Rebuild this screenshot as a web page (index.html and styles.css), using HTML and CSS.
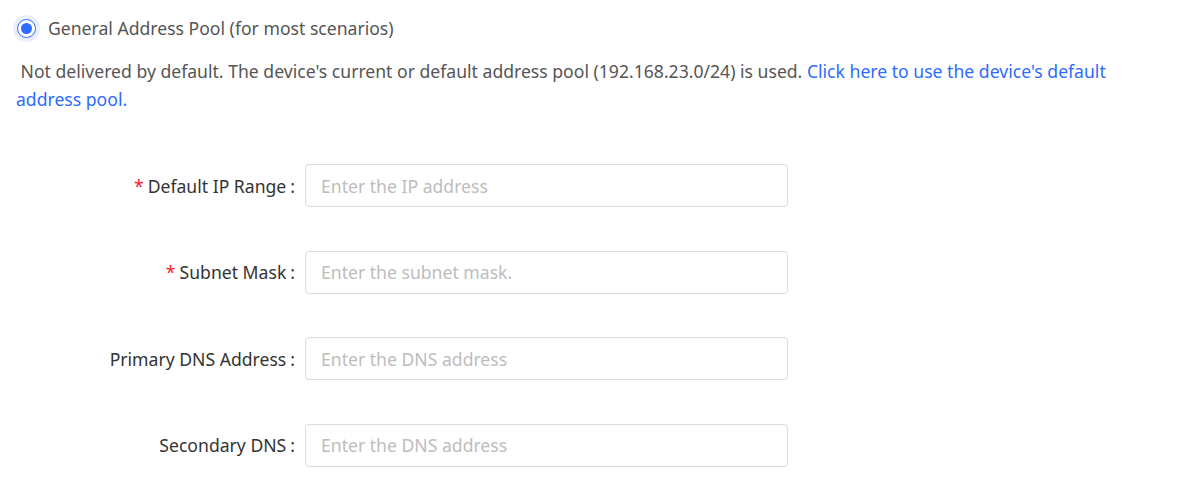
FILE: index.html
```html
<!DOCTYPE html>
<html lang="en">
<head>
<meta charset="utf-8">
<title>Address Pool</title>
<link rel="stylesheet" href="styles.css">
</head>
<body>
<div class="page">
  <label class="radio-row">
    <span class="radio"><span class="radio-dot"></span></span>
    <span class="radio-label">General Address Pool (for most scenarios)</span>
  </label>
  <p class="note">&nbsp;Not delivered by default. The device's current or default address pool (192.168.23.0/24) is used. <a class="link" href="#">Click here to use the device's default address pool.</a></p>
  <form class="form">
    <div class="row">
      <div class="label"><span class="req">*</span>Default IP Range<span class="colon">:</span></div>
      <input class="input" type="text" placeholder="Enter the IP address">
    </div>
    <div class="row">
      <div class="label"><span class="req">*</span>Subnet Mask<span class="colon">:</span></div>
      <input class="input" type="text" placeholder="Enter the subnet mask.">
    </div>
    <div class="row">
      <div class="label">Primary DNS Address<span class="colon">:</span></div>
      <input class="input" type="text" placeholder="Enter the DNS address">
    </div>
    <div class="row">
      <div class="label">Secondary DNS<span class="colon">:</span></div>
      <input class="input" type="text" placeholder="Enter the DNS address">
    </div>
  </form>
</div>
</body>
</html>
```
FILE: styles.css
```css
* { box-sizing: border-box; }
html, body { margin: 0; padding: 0; background: #fff; }
body {
  font-family: "Noto Sans", "Liberation Sans", sans-serif;
  font-size: 17.6px;
  color: #555;
}
.page { padding: 14px 16px 0 16px; }
.radio-row {
  display: flex;
  align-items: center;
  height: 28px;
  gap: 12px;
  margin-left: 1px;
}
.radio {
  width: 19px;
  height: 19px;
  border: 1.5px solid #2d6bfd;
  border-radius: 50%;
  display: flex;
  align-items: center;
  justify-content: center;
  box-shadow: 0 0 0 4px #e9effe;
  background: #fff;
  flex-shrink: 0;
}
.radio-dot {
  width: 11px;
  height: 11px;
  border-radius: 50%;
  background: #2d6bfd;
}
.radio-label { color: #555; }
.note {
  margin: 15px 0 0 0;
  font-size: 17.6px;
  line-height: 28px;
  color: #555;
}
.link { color: #2d6bfd; text-decoration: none; }
.form {
  margin-top: 51px;
  display: flex;
  flex-direction: column;
  gap: 43.5px;
}
.row { display: flex; align-items: center; }
.label {
  width: 279px;
  text-align: right;
  color: #333;
  margin-right: 10px;
  white-space: nowrap;
}
.req { color: #f5222d; margin-right: 4px; }
.colon { margin-left: 4px; }
.input {
  width: 483px;
  height: 43px;
  border: 1px solid #dcdcdc;
  border-radius: 4px;
  padding: 0 15px;
  font-family: inherit;
  font-size: 17.6px;
  color: #333;
  outline: none;
}
.input::placeholder { color: #bdbdbd; }
```
